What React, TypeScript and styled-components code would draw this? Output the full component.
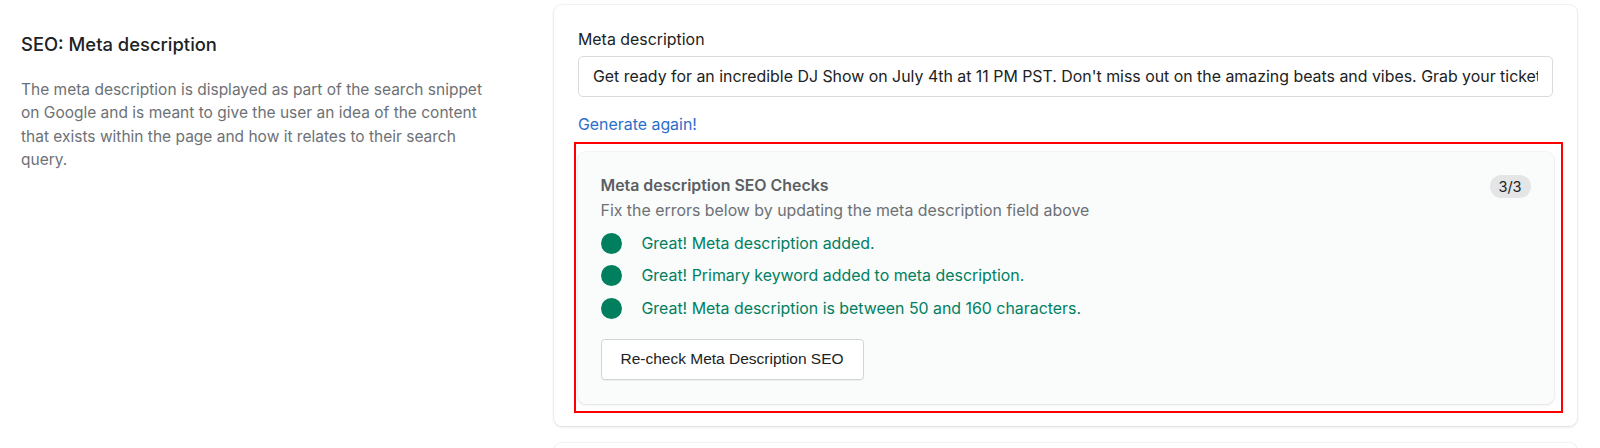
import styled, { createGlobalStyle } from "styled-components";

const GlobalStyle = createGlobalStyle`
  body {
    margin: 0;
    background: #ffffff;
    font-family: Inter, "Noto Sans", "Liberation Sans", sans-serif;
    -webkit-font-smoothing: antialiased;
  }
`;

const Page = styled.div`
  display: flex;
  align-items: flex-start;
  padding: 5px 23px 0 21px;
  gap: 59px;
`;

const Aside = styled.div`
  width: 474px;
  flex-shrink: 0;
  padding-top: 27px;
`;

const AsideTitle = styled.h2`
  margin: 0;
  font-size: 18.4px;
  line-height: 24px;
  font-weight: 500;
  color: #202223;
`;

const AsideText = styled.p`
  margin: 22px 0 0;
  width: 470px;
  font-size: 15.5px;
  line-height: 23.3px;
  color: #6d7175;
`;

const Column = styled.div`
  flex: 1;
  display: flex;
  flex-direction: column;
  gap: 17px;
`;

const Card = styled.section<{ $stub?: boolean }>`
  background: #ffffff;
  border-radius: 8px;
  box-shadow: 0 0 0 1px rgba(63, 63, 68, 0.05), 0 1px 3px rgba(63, 63, 68, 0.15);
  padding: ${(p) => (p.$stub ? "0" : "25px 24px 13px 24px")};
  height: ${(p) => (p.$stub ? "40px" : "auto")};
`;

const Label = styled.label`
  display: block;
  font-size: 15.9px;
  line-height: 20px;
  color: #202223;
  margin-bottom: 6px;
`;

const TextInput = styled.input`
  box-sizing: border-box;
  width: 100%;
  height: 41px;
  padding: 0 14px;
  border: 1px solid #d9dbdd;
  border-radius: 5px;
  font-family: inherit;
  font-size: 15.9px;
  color: #202223;
  background: #ffffff;
  outline: none;
`;

const Link = styled.a`
  display: inline-block;
  margin-top: 18px;
  font-size: 15.9px;
  line-height: 20px;
  color: #2c6ecb;
  text-decoration: none;
  cursor: pointer;
`;

const Highlight = styled.div`
  margin: 7px -10px 0 -4px;
  border: 2.5px solid #ff0000;
  padding: 7.5px 7.5px 7.5px 1.5px;
`;

const ChecksPanel = styled.div`
  background: #fafbfb;
  border-radius: 8px;
  box-shadow: 0 0 0 1px rgba(63, 63, 68, 0.04), 0 1px 3px rgba(63, 63, 68, 0.12);
  padding: 23px 23px 24px 23px;
`;

const PanelHead = styled.div`
  display: flex;
  justify-content: space-between;
  align-items: flex-start;
`;

const PanelTitle = styled.h3`
  margin: 1px 0 0;
  font-size: 15.9px;
  line-height: 20px;
  font-weight: 600;
  color: #5c5f62;
`;

const Badge = styled.span`
  display: inline-flex;
  align-items: center;
  justify-content: center;
  width: 41px;
  height: 23px;
  border-radius: 12px;
  background: #e4e5e7;
  color: #202223;
  font-size: 14.5px;
`;

const PanelHint = styled.p`
  margin: 3px 0 0;
  font-size: 15.9px;
  line-height: 20px;
  color: #6d7175;
`;

const CheckList = styled.ul`
  list-style: none;
  margin: 12px 0 0;
  padding: 0;
  display: flex;
  flex-direction: column;
  gap: 11.5px;
`;

const CheckItem = styled.li`
  display: flex;
  align-items: center;
  gap: 20px;
  font-size: 15.9px;
  line-height: 21px;
  color: #008060;
`;

const Dot = styled.span<{ $ok: boolean }>`
  width: 21px;
  height: 21px;
  border-radius: 50%;
  flex-shrink: 0;
  background: ${(p) => (p.$ok ? "#007f5f" : "#d72c0d")};
`;

const RecheckButton = styled.button`
  margin-top: 20px;
  height: 41px;
  padding: 0 19px;
  background: #ffffff;
  border: 1px solid #d2d5d8;
  border-radius: 4px;
  box-shadow: 0 1px 0 rgba(0, 0, 0, 0.05);
  font-family: "Liberation Sans", Arial, sans-serif;
  font-size: 15.5px;
  color: #202223;
  cursor: pointer;
`;

const checks = [
  "Great! Meta description added.",
  "Great! Primary keyword added to meta description.",
  "Great! Meta description is between 50 and 160 characters.",
];

const App = () => {
  const value =
    "Get ready for an incredible DJ Show on July 4th at 11 PM PST. Don't miss out on the amazing beats and vibes. Grab your tickets now!";
  return (
    <>
      <GlobalStyle />
      <Page>
        <Aside>
          <AsideTitle>SEO: Meta description</AsideTitle>
          <AsideText>
            The meta description is displayed as part of the search snippet on
            Google and is meant to give the user an idea of the content that
            exists within the page and how it relates to their search query.
          </AsideText>
        </Aside>
        <Column>
          <Card>
            <Label>Meta description</Label>
            <TextInput value={value} readOnly />
            <Link>Generate again!</Link>
            <Highlight>
              <ChecksPanel>
                <PanelHead>
                  <PanelTitle>Meta description SEO Checks</PanelTitle>
                  <Badge>
                    {checks.length}/{checks.length}
                  </Badge>
                </PanelHead>
                <PanelHint>
                  Fix the errors below by updating the meta description field
                  above
                </PanelHint>
                <CheckList>
                  {checks.map((text) => (
                    <CheckItem key={text}>
                      <Dot $ok />
                      {text}
                    </CheckItem>
                  ))}
                </CheckList>
                <RecheckButton>Re-check Meta Description SEO</RecheckButton>
              </ChecksPanel>
            </Highlight>
          </Card>
          <Card $stub />
        </Column>
      </Page>
    </>
  );
};

export default App;
